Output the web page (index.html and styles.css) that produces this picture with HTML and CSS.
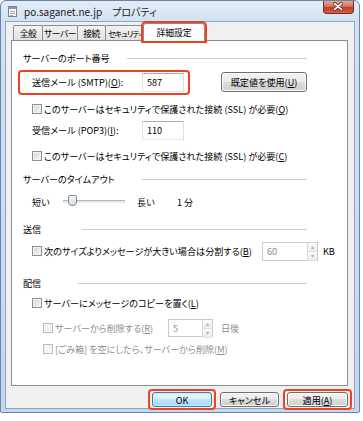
FILE: index.html
```html
<!DOCTYPE html>
<html lang="ja">
<head>
    <meta charset="UTF-8">
    <meta name="viewport" content="width=device-width, initial-scale=1.0">
    <title>po.saganet.ne.jp プロパティ</title>
    <link rel="stylesheet" href="styles.css">
</head>
<body>
    <div class="window">
        <div class="titlebar">
            <svg class="app-icon" width="9" height="11" viewBox="0 0 9 11">
                <rect x="0.5" y="0.5" width="8" height="10" fill="#f6f6f6" stroke="#7b838e"/>
                <rect x="1" y="1" width="7" height="2" fill="#8e9bab"/>
                <path d="M2 5.5h5M2 7.5h5M2 9.5h3" stroke="#a7afb9"/>
            </svg>
            <span class="title">po.saganet.ne.jp</span>
            <span class="title title-sub">プロパティ</span>
            <span class="close-btn">
                <svg width="31" height="13" viewBox="0 0 31 13">
                    <path d="M12 3.5l7 6M19 3.5l-7 6" stroke="#7a2b1f" stroke-width="3.4" stroke-linecap="round"/>
                    <path d="M12 3.5l7 6M19 3.5l-7 6" stroke="#fff" stroke-width="1.8" stroke-linecap="round"/>
                </svg>
            </span>
        </div>

        <div class="client">
            <div class="tabs">
                <span class="tab t-general">全般</span>
                <span class="tab t-server">サーバー</span>
                <span class="tab t-conn">接続</span>
                <span class="tab t-sec">セキュリティ</span>
                <span class="tab active">詳細設定</span>
            </div>

            <div class="panel">
                <div class="group-title"><span class="w-port">サーバーのポート番号</span><i></i></div>

                <div class="row mt4">
                    <div class="marked-row">
                        <span class="field-label">送信メール (SMTP)(<u>O</u>):</span>
                        <span class="textbox">587</span>
                    </div>
                    <span class="btn wide-btn">既定値を使用(<u>U</u>)</span>
                </div>

                <div class="row mt7 indent">
                    <span class="checkbox"></span>
                    <span>このサーバーはセキュリティで保護された接続 (SSL) が必要(<u>Q</u>)</span>
                </div>

                <div class="row mt1 indent">
                    <span class="field-label">受信メール (POP3)(<u>I</u>):</span>
                    <span class="textbox">110</span>
                </div>

                <div class="row mt6 indent">
                    <span class="checkbox"></span>
                    <span>このサーバーはセキュリティで保護された接続 (SSL) が必要(<u>C</u>)</span>
                </div>

                <div class="group-title mt3"><span class="w-timeout">サーバーのタイムアウト</span><i></i></div>

                <div class="row mt3 indent">
                    <span class="slider-label">短い</span>
                    <span class="slider"><span class="thumb"></span></span>
                    <span class="slider-label long">長い</span>
                    <span>1 分</span>
                </div>

                <div class="group-title mt7"><span class="w-send">送信</span><i></i></div>

                <div class="row mt2 indent">
                    <span class="checkbox"></span>
                    <span class="split-text">次のサイズよりメッセージが大きい場合は分割する(<u>B</u>)</span>
                    <span class="spin">
                        <span class="spin-val">60</span>
                        <span class="spin-btns"><b>▴</b><b>▾</b></span>
                    </span>
                    <span class="unit">KB</span>
                </div>

                <div class="group-title mt12"><span class="w-deliver">配信</span><i></i></div>

                <div class="row indent">
                    <span class="checkbox"></span>
                    <span>サーバーにメッセージのコピーを置く(<u>L</u>)</span>
                </div>

                <div class="row mt5 sub disabled">
                    <span class="checkbox"></span>
                    <span class="delete-text">サーバーから削除する(<u>R</u>)</span>
                    <span class="spin small">
                        <span class="spin-val">5</span>
                        <span class="spin-btns"><b>▴</b><b>▾</b></span>
                    </span>
                    <span class="unit days">日後</span>
                </div>

                <div class="row mt1 sub disabled">
                    <span class="checkbox"></span>
                    <span>[ごみ箱] を空にしたら、サーバーから削除(<u>M</u>)</span>
                </div>
            </div>

            <div class="footer">
                <span class="btn default marked ok">OK</span>
                <span class="btn cancel">キャンセル</span>
                <span class="btn marked apply">適用(<u>A</u>)</span>
            </div>
        </div>
    </div>
</body>
</html>
```

FILE: styles.css
```css
:root {
    --mark: #ea4520;
    --face: #f0f0f0;
    --line: #c9ced6;
    --muted: #8d8d8d;
}

* {
    box-sizing: border-box;
}

body {
    margin: 0;
    background: #fff;
    font-family: "Noto Sans CJK JP", "Noto Sans", sans-serif;
    font-size: 9.1px;
    font-feature-settings: "palt";
    color: #000;
}

u {
    text-underline-offset: 1px;
}

/* window frame */
.window {
    width: 360px;
    height: 413px;
    border: 1px solid #6a84a3;
    border-radius: 6px 6px 2px 2px;
    background: linear-gradient(#e2ecf7 0, #d3e2f2 20px, #c4d7ec 100%);
    padding: 0 4px 3px;
    display: flex;
    flex-direction: column;
}

.titlebar {
    height: 20px;
    display: flex;
    align-items: center;
    padding-left: 3px;
}

.app-icon {
    margin-right: 7px;
}

.title {
    font-size: 10px;
    color: #1b1b1b;
}

.title-sub {
    margin-left: 10px;
}

.close-btn {
    margin-left: auto;
    margin-right: 1px;
    align-self: flex-start;
    width: 31px;
    height: 13px;
    border: 1px solid #7b2a1c;
    border-top: none;
    border-radius: 0 0 4px 4px;
    background: linear-gradient(#e3a797 0, #d2725c 45%, #bb3e26 55%, #cf6147 100%);
    display: flex;
}

.close-btn svg {
    margin: -1px 0 0 -1px;
}

.client {
    flex: 1;
    background: var(--face);
    border: 1px solid #8fa4be;
    padding: 3px 6px 1px 5px;
    display: flex;
    flex-direction: column;
}

/* tabs */
.tabs {
    height: 15px;
    display: flex;
    align-items: flex-end;
    padding-left: 2px;
}

.tab {
    height: 15px;
    margin-right: -1px;
    border: 1px solid #898c95;
    border-bottom: none;
    border-radius: 2px 2px 0 0;
    background: linear-gradient(#f3f3f3, #e2e2e2);
    display: flex;
    align-items: center;
    justify-content: center;
    font-size: 8.8px;
    letter-spacing: -0.5px;
    white-space: nowrap;
}

.t-general { width: 30px; }
.t-server { width: 36px; }
.t-conn { width: 29px; }
.t-sec {
    width: 39px;
    justify-content: flex-start;
    padding-left: 2px;
    font-size: 8px;
    letter-spacing: -1px;
}

.tab.active {
    position: relative;
    z-index: 1;
    width: 62px;
    height: 18px;
    margin: 0 0 -1px 0;
    background: #fff;
    outline: 2px solid var(--mark);
    outline-offset: 0;
    border-radius: 3px 3px 0 0;
    letter-spacing: 0;
}

/* panel */
.panel {
    height: 346px;
    background: #fff;
    border: 1px solid #898c95;
    padding: 7px 40px 0 11px;
}

.group-title {
    height: 20px;
    display: flex;
    align-items: center;
}

.group-title span {
    flex: none;
}

.group-title i {
    flex: 1;
    height: 1px;
    background: var(--line);
}

.w-port { width: 104px; }
.w-timeout { width: 119px; }
.w-send { width: 59px; }
.w-deliver { width: 55px; }

.row {
    height: 20px;
    display: flex;
    align-items: center;
    white-space: nowrap;
}

.row > * {
    flex: none;
}

.indent {
    padding-left: 9px;
}

.sub {
    padding-left: 20px;
}

.mt1 { margin-top: 1px; }
.mt2 { margin-top: 2px; }
.mt3 { margin-top: 3px; }
.mt4 { margin-top: 4px; }
.mt5 { margin-top: 5px; }
.mt6 { margin-top: 6px; }
.mt7 { margin-top: 7px; }
.mt12 { margin-top: 12px; }

.marked-row {
    display: flex;
    align-items: center;
    margin: -3px 0 -3px -5px;
    padding: 1px 4px 1px 12px;
    border: 2px solid var(--mark);
    border-radius: 4px;
}

.field-label {
    width: 110px;
}

.textbox {
    width: 42px;
    height: 19px;
    border: 1px solid;
    border-color: #abadb3 #dbdfe6 #e3e9ef #e2e3ea;
    background: #fff;
    padding-left: 4px;
    line-height: 17px;
}

.checkbox {
    width: 10px;
    height: 10px;
    margin-right: 2px;
    border: 1px solid #8e8f8f;
    background: linear-gradient(135deg, #d4d4d4, #fafafa);
    box-shadow: inset 0 0 0 1px #f2f2f2;
}

.disabled {
    color: var(--muted);
}

.disabled .checkbox {
    border-color: #bcbcbc;
    background: #f4f4f4;
}

/* slider */
.slider-label {
    width: 31px;
}

.slider-label.long {
    width: 40px;
    margin-left: 12px;
}

.slider {
    position: relative;
    width: 62px;
    height: 4px;
    border-top: 1px solid #b3b3b3;
    border-bottom: 1px solid #fff;
    background: #e7eaea;
}

.thumb {
    position: absolute;
    left: 5px;
    top: -6px;
    width: 9px;
    height: 11px;
    border: 1px solid #7f8a97;
    border-radius: 2px 2px 4px 4px;
    background: linear-gradient(#f7f7f7, #d9dcdf);
}

/* spin boxes */
.split-text {
    width: 218px;
}

.delete-text {
    width: 113px;
}

.spin {
    width: 56px;
    height: 19px;
    display: flex;
    border: 1px solid #c9cbd1;
    background: #fff;
    color: var(--muted);
}

.spin.small {
    width: 45px;
    height: 18px;
}

.spin-val {
    flex: 1;
    padding-left: 4px;
    line-height: 17px;
}

.spin-btns {
    width: 10px;
    display: flex;
    flex-direction: column;
    border-left: 1px solid #dadada;
}

.spin-btns b {
    flex: 1;
    font-weight: normal;
    font-size: 6px;
    line-height: 8px;
    text-align: center;
    color: #b0b0b0;
    background: linear-gradient(#fbfbfb, #ececec);
    border-bottom: 1px solid #e0e0e0;
}

.unit {
    margin-left: 5px;
}

.unit.days {
    margin-left: 8px;
}

/* buttons */
.btn {
    height: 20px;
    display: flex;
    align-items: center;
    justify-content: center;
    border: 1px solid #707070;
    border-radius: 3px;
    background: linear-gradient(#f2f2f2 0, #ebebeb 50%, #dddddd 50%, #cfcfcf 100%);
    box-shadow: inset 0 0 0 1px #fbfbfb;
}

.wide-btn {
    width: 86px;
    margin-left: auto;
}

.footer {
    margin-top: 6px;
    display: flex;
    justify-content: flex-end;
    gap: 8px;
}

.footer .btn {
    height: 15px;
}

.ok { width: 60px; }
.cancel { width: 59px; }
.apply { width: 61px; }

.btn.default {
    border-color: #3c7fb1;
    background: linear-gradient(#eaf6fd 0, #d9f0fc 50%, #bee6fd 50%, #a7d9f5 100%);
    box-shadow: inset 0 0 0 1px #c7ecfb;
}

.marked {
    position: relative;
}

.marked::after {
    content: "";
    position: absolute;
    inset: -4px -5px;
    border: 2px solid var(--mark);
    border-radius: 4px;
}
```
